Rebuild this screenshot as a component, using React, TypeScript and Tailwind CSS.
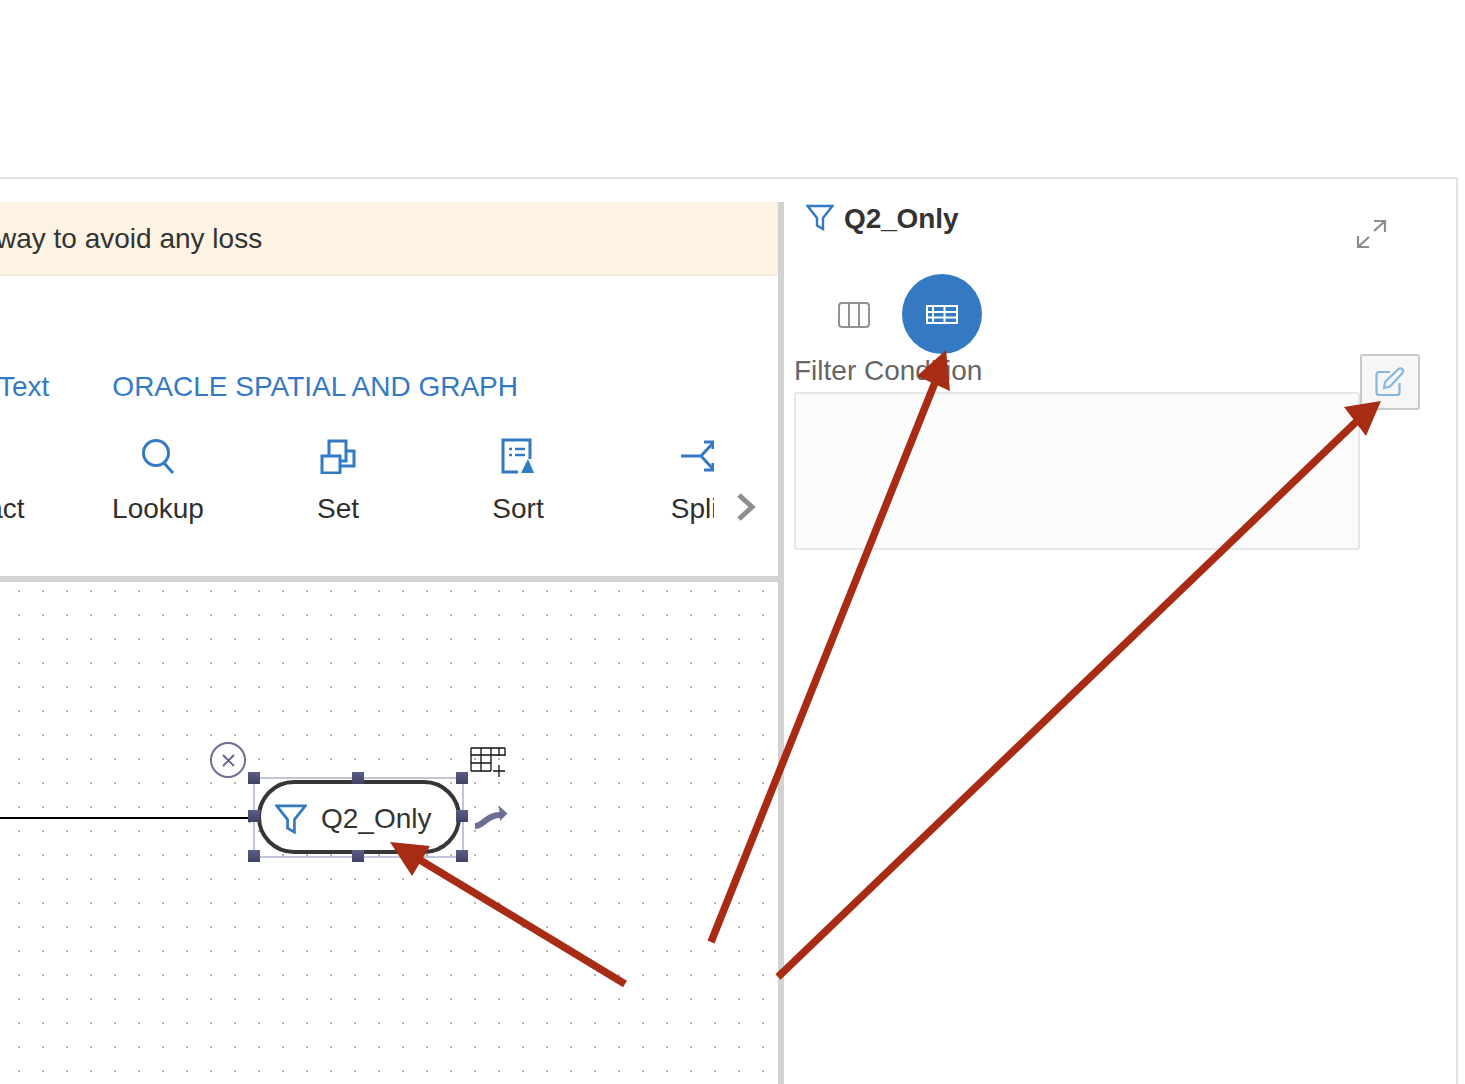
const font = "[font-family:'Liberation_Sans',Arial,sans-serif]";

function Funnel({ className }: { className: string }) {
  return (
    <svg className={className} viewBox="0 0 28 26" fill="none" stroke="#337ac3" strokeWidth="2.4">
      <path d="M1.5 1.5H26.500L17 13.500V24.500L11 21V13.500Z" />
    </svg>
  );
}

function ToolItem({ label, icon, className = "" }: { label: string; icon?: React.ReactNode; className?: string }) {
  return (
    <div className={`w-[180px] shrink-0 flex flex-col items-center ${className}`}>
      <div className="h-[38px] flex items-center justify-center">{icon}</div>
      <div className="mt-[18px] text-[28px] leading-[32px] text-[#2f2f2f]">{label}</div>
    </div>
  );
}

function Handle({ className }: { className: string }) {
  return <div className={`absolute w-[12px] h-[12px] bg-gradient-to-b from-[#5c5f85] to-[#3f4263] ${className}`} />;
}

export default function App() {
  return (
    <div className={`relative h-[1084px] overflow-hidden bg-white pt-[177px] ${font}`}>
      <div className="w-[1458px] h-[907px] border-t-2 border-r-2 border-[#e2e2e2] flex">
        {/* left column */}
        <div className="w-[778px] shrink-0 pt-[23px] flex flex-col">
          <div className="h-[74px] shrink-0 bg-[#fcf3e3] border-b-2 border-[#f6ecd9] flex items-center pt-[2px]">
            <span className="text-[28px] text-[#333] -ml-[4px] whitespace-nowrap">way to avoid any loss</span>
          </div>
          <div className="relative h-[300px] shrink-0 overflow-hidden">
            <div className="flex items-center gap-[63px] mt-[93px] h-[36px] text-[28px] text-[#337ac3] whitespace-nowrap -ml-[2px]">
              <span>Text</span>
              <span>ORACLE SPATIAL AND GRAPH</span>
            </div>
            <div className="w-[714px] overflow-hidden mt-[32px]">
              <div className="flex -ml-[112px]">
                <ToolItem label="Extract" className="pl-[6px]" />
                <ToolItem
                  label="Lookup"
                  icon={
                    <svg width="34" height="36" viewBox="0 0 34 36" fill="none" stroke="#337ac3" strokeWidth="3">
                      <circle cx="15" cy="15" r="12.500" />
                      <path d="M23 25L32 35" />
                    </svg>
                  }
                />
                <ToolItem
                  label="Set"
                  icon={
                    <svg width="36" height="36" viewBox="0 0 36 36" fill="none" stroke="#337ac3" strokeWidth="3">
                      <path d="M9 18V3H26V13" />
                      <path d="M26 13H34V28H20" />
                      <path d="M26 13V23H20" />
                      <rect x="2" y="18" width="18" height="17" />
                    </svg>
                  }
                />
                <ToolItem
                  label="Sort"
                  icon={
                    <svg width="34" height="36" viewBox="0 0 34 36" fill="none" stroke="#337ac3" strokeWidth="3">
                      <path d="M29 21V2H2V34H17" />
                      <path d="M8 11H11M14 11H24M8 17H11M14 17H24" strokeWidth="2.500" />
                      <path d="M20 35L27 21L33 35Z" fill="#337ac3" stroke="none" />
                    </svg>
                  }
                />
                <ToolItem
                  label="Split"
                  icon={
                    <svg width="36" height="36" viewBox="0 0 36 36" fill="none" stroke="#337ac3" strokeWidth="3">
                      <path d="M1 18H21L33 5M21 18L33 31" />
                      <path d="M24 4H33V11M24 32H33V25" />
                    </svg>
                  }
                />
              </div>
            </div>
            <svg className="absolute left-[736px] top-[217px]" width="20" height="28" viewBox="0 0 20 28" fill="none" stroke="#8e8e8e" strokeWidth="5">
              <path d="M3 2L16 14L3 26" />
            </svg>
          </div>
          <div className="h-[6px] shrink-0 bg-[#d2d2d2]" />
          <div className="relative flex-1 bg-[radial-gradient(circle,#b4b4b4_1px,transparent_1.2px)] bg-[size:24px_24px] bg-[position:7px_-3px]">
            <div className="absolute left-0 top-[235px] w-[252px] h-[2px] bg-black" />
            <div className="absolute left-[249px] top-[229px] w-0 h-0 border-y-[6px] border-y-transparent border-l-[10px] border-l-black" />

            <div className="absolute left-[210px] top-[160px] w-[36px] h-[36px] rounded-full border-2 border-[#6b6f94] bg-white flex items-center justify-center">
              <svg width="15" height="15" viewBox="0 0 15 15" stroke="#5f6388" strokeWidth="1.800"><path d="M2 2L13 13M13 2L2 13" /></svg>
            </div>

            <svg className="absolute left-[470px] top-[165px]" width="38" height="31" viewBox="0 0 38 31" fill="none" stroke="#111" strokeWidth="1.300">
              <path d="M1 1H35M1 8H35M1 16H21M1 24H21M1 1V24M11 1V24M21 1V24M29 1V9M35 1V9M29 18V30M23 24H35" />
            </svg>

            <svg className="absolute left-[472px] top-[222px]" width="36" height="28" viewBox="0 0 36 28" fill="none">
              <path d="M3 22C12 22 14 11 28 11" stroke="#6b6f94" strokeWidth="6" />
              <path d="M27 2L35.500 9.500L28 17Z" fill="#6b6f94" />
            </svg>

            <div className="absolute left-[253px] top-[195px] w-[211px] h-[81px] border-2 border-[#c2c4dd]" />
            <div className="absolute left-[257px] top-[198px] w-[204px] h-[74px] rounded-[37px] border-[4px] border-[#363636] bg-white flex items-center pl-[14px] pt-[4px]">
              <Funnel className="w-[32px] h-[30px]" />
              <span className="ml-[14px] text-[28px] text-[#333] leading-none">Q2_Only</span>
            </div>

            <Handle className="left-[248px] top-[190px]" />
            <Handle className="left-[352px] top-[190px]" />
            <Handle className="left-[456px] top-[190px]" />
            <Handle className="left-[248px] top-[228px]" />
            <Handle className="left-[456px] top-[228px]" />
            <Handle className="left-[248px] top-[268px]" />
            <Handle className="left-[352px] top-[268px]" />
            <Handle className="left-[456px] top-[268px]" />
          </div>
        </div>

        {/* splitter */}
        <div className="w-[6px] shrink-0 mt-[23px] bg-[#d2d2d2]" />

        {/* right panel */}
        <div className="flex-1 flex flex-col">
          <div className="flex items-start h-[95px] pl-[22px] pt-[25px]">
            <Funnel className="w-[28px] h-[27px] shrink-0" />
            <span className="ml-[10px] text-[28px] leading-[30px] font-bold text-[#333] tracking-[-0.1px]">Q2_Only</span>
            <svg className="ml-[398px] mt-[15px]" width="31" height="30" viewBox="0 0 31 30" fill="none" stroke="#8d8d8d" strokeWidth="2.200">
              <path d="M18 12L29 2M18 2H29V13M13 18L2 28M2 17V28H13" />
            </svg>
          </div>
          <div className="flex items-center h-[80px] pl-[53px]">
            <svg className="mt-[2px]" width="34" height="28" viewBox="0 0 34 28" fill="none" stroke="#929292" strokeWidth="2">
              <rect x="2" y="2" width="30" height="24" rx="3" />
              <path d="M12 2V26M22 2V26" />
            </svg>
            <div className="ml-[31px] w-[80px] h-[80px] rounded-full bg-[#337ac3] flex items-center justify-center">
              <svg width="32" height="19" viewBox="0 0 32 19" fill="none" stroke="#fff" strokeWidth="2">
                <rect x="1" y="1" width="30" height="17" />
                <path d="M1 7H31M1 12.500H31M7 1V18M18.500 1V18" />
              </svg>
            </div>
          </div>
          <div className="flex pl-[10px]">
            <div className="w-[566px]">
              <div className="h-[38px] text-[28px] leading-[34px] text-[#666] whitespace-nowrap">Filter Condition</div>
              <div className="h-[158px] bg-[#fbfbfb] border-2 border-[#e6e6e6] rounded-[3px]" />
            </div>
            <div className="w-[60px] h-[56px] bg-[#f6f6f6] border-2 border-[#c9c9c9] rounded-[3px] flex items-center justify-center">
              <svg width="30" height="30" viewBox="0 0 30 30" fill="none" stroke="#84b8e2" strokeWidth="2.200">
                <path d="M15 5H4a2.500 2.500 0 0 0-2.500 2.500V25.500A2.500 2.500 0 0 0 4 28H22a2.500 2.500 0 0 0 2.500-2.500V16" />
                <path d="M9 21L10 15L23 2.500C24.500 1 26 1 27 2C28.500 3 28.500 5 27.500 6L15 19.500Z" />
              </svg>
            </div>
          </div>
        </div>
      </div>

      {/* annotation arrows */}
      <svg className="absolute left-0 top-0 pointer-events-none" width="1465" height="1084" viewBox="0 0 1465 1084" fill="none">
        <path d="M711 942L936 380" stroke="#a82b13" strokeWidth="7.500" />
        <path d="M946 350L917 376L950 391Z" fill="#a82b13" />
        <path d="M778 977L1357 421" stroke="#a82b13" strokeWidth="7.500" />
        <path d="M1381 401L1344 407L1366 436Z" fill="#a82b13" />
        <path d="M625 984L420 860" stroke="#a82b13" strokeWidth="7.500" />
        <path d="M390 842L430 846L412 876Z" fill="#a82b13" />
      </svg>
    </div>
  );
}
